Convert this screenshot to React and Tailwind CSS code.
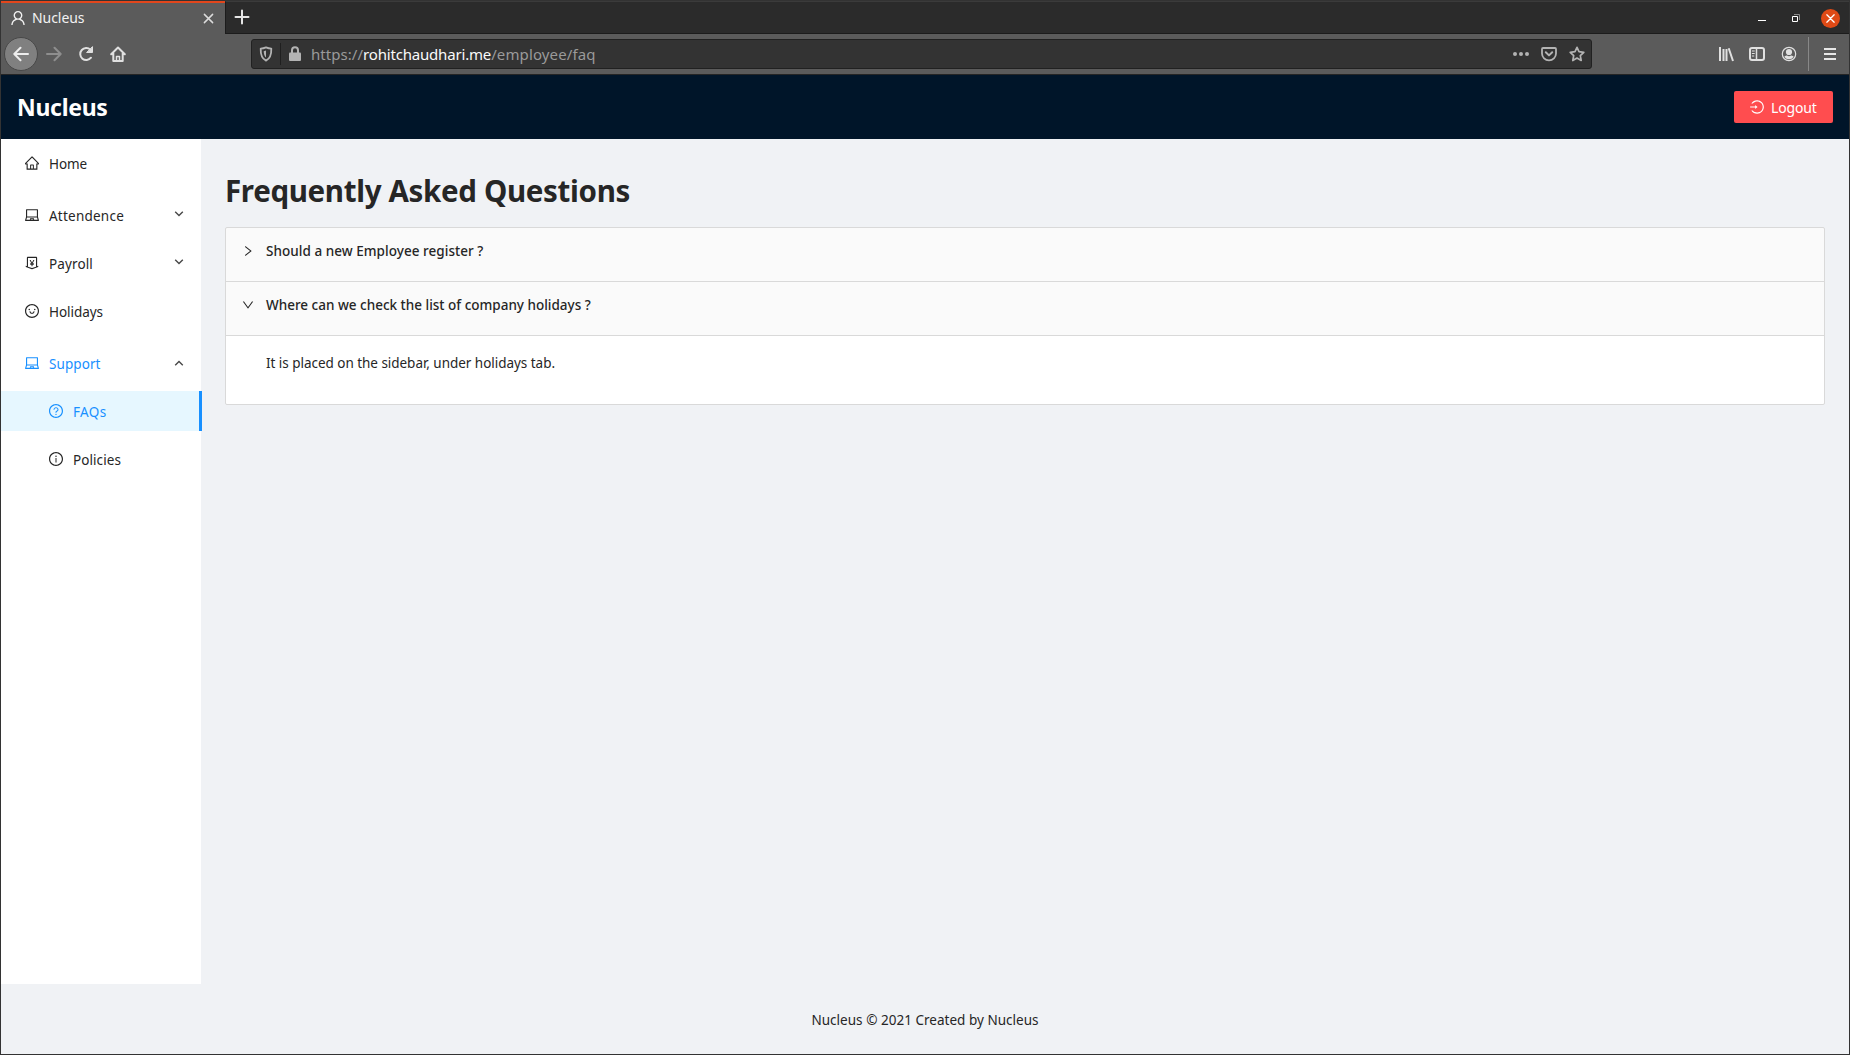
import {
  AiOutlineDown,
  AiOutlineHome,
  AiOutlineInfoCircle,
  AiOutlineLaptop,
  AiOutlineLogin,
  AiOutlineMoneyCollect,
  AiOutlineQuestionCircle,
  AiOutlineRight,
  AiOutlineSmile,
  AiOutlineUser,
} from "react-icons/ai";

// Ant Design glyphs are drawn without their outer margin.
const TIGHT = "64 64 896 896";

function Icon({ size = 16, className = "", children, ...rest }) {
  return (
    <svg
      width={size}
      height={size}
      viewBox="0 0 16 16"
      fill="none"
      stroke="currentColor"
      strokeWidth="2"
      strokeLinecap="round"
      strokeLinejoin="round"
      className={`shrink-0 ${className}`}
      {...rest}
    >
      {children}
    </svg>
  );
}

function TabStrip() {
  return (
    <div className="flex h-[33px] shrink-0 bg-[#2b2b2b]">
      <div className="flex w-[224px] items-center border-t-2 border-[#e2461c] bg-[#5b5b5b] pb-px pl-[9px] pr-[11px] text-[#f2f2f2]">
        <AiOutlineUser viewBox={TIGHT} className="size-4 shrink-0" />
        <span className="-mt-px ml-[6px] text-[14px] leading-5 tracking-[-0.05px]">Nucleus</span>
        <Icon size={11} className="ml-auto text-[#dcdcdc]" strokeWidth="2.1">
          <path d="M2 2l12 12M14 2L2 14" />
        </Icon>
      </div>
      <div className="flex flex-1 items-center border-b border-l border-t border-b-[#1c1c1c] border-l-[#1c1c1c] border-t-[#3b3b3b] pb-px pl-[8px] pr-[9px]">
        <Icon size={16} className="text-[#e6e6e6]">
          <path d="M8 1.500v13M1.500 8h13" />
        </Icon>
        <div className="ml-auto flex items-center">
          <span className="mt-[7px] h-px w-2 bg-white" />
          <svg width="10" height="10" viewBox="0 0 10 10" fill="none" className="ml-[25px] mt-[3px]">
            <path d="M3 .5h5.500V6" stroke="#8a8a8a" />
            <path d="M1.500 2.500h5v5h-5z" stroke="#fff" />
          </svg>
          <span className="ml-[20px] mt-[3px] flex size-[19px] items-center justify-center rounded-full bg-[#df4a16]">
            <Icon size={9} className="text-white" strokeWidth="2.400">
              <path d="M1.500 1.500l13 13M14.500 1.500l-13 13" />
            </Icon>
          </span>
        </div>
      </div>
    </div>
  );
}

function Toolbar() {
  return (
    <div className="flex h-[41px] shrink-0 items-center border-b border-[#252525] bg-[#5b5b5b] pl-[3px] pr-[13px] text-[#e0e0e0]">
      <span className="flex size-[34px] items-center justify-center rounded-full border border-[#484848] bg-[#808080] text-[#eeeeee]">
        <Icon>
          <path d="M15 8H1.500M7.500 1.800L1.300 8l6.200 6.200" />
        </Icon>
      </span>
      <Icon className="ml-[8px] text-[#8e8e8e]">
        <path d="M1 8h13.500M8.500 1.800L14.700 8l-6.200 6.200" />
      </Icon>
      <Icon className="ml-[16px]">
        <path d="M13 11.700a6 6 0 1 1-.6-8" />
        <path d="M14.500 1v5.500H9z" fill="currentColor" strokeWidth="1" />
      </Icon>
      <Icon className="ml-[16px]">
        <path d="M1.200 8.300L8 1.500l6.800 6.800M3.300 7v8h9.400V7" />
        <path d="M6.500 15v-4.500h3V15" strokeWidth="1.500" />
      </Icon>

      <div className="ml-[125px] flex h-[30px] w-[1341px] items-center rounded-[3px] border border-[#212121] bg-[#333333] pl-[6px] pr-[6px] text-[#b3b3b3]">
        <Icon>
          <path d="M8 1.400c2 .9 3.600 1.200 5.300 1.200C13.500 8.500 12 12.700 8 14.600 4 12.700 2.500 8.500 2.700 2.600 4.400 2.600 6 2.300 8 1.400z" strokeWidth="1.800" />
          <path d="M8 4.500v7c-1.500-1.300-2.200-3.200-2.300-6.300z" fill="currentColor" stroke="none" />
        </Icon>
        <span className="ml-[6px] h-[22px] w-px bg-[#1f1f1f]" />
        <Icon className="ml-[6px]">
          <path d="M5 7V4.300a3 3 0 0 1 6 0V7" />
          <rect x="2" y="6.500" width="12" height="8.500" rx="1" fill="currentColor" stroke="none" />
        </Icon>
        <div className="ml-[8px] text-[15px] leading-6 text-[#9a9a9a]">
          <span className="tracking-[0.04px]">https://</span>
          <span className="tracking-[-0.18px] text-[#fafafa]">rohitchaudhari.me</span>
          <span className="tracking-[0.12px]">/employee/faq</span>
        </div>
        <div className="ml-auto flex items-center gap-[12px]">
          <Icon fill="currentColor" stroke="none">
            <circle cx="2" cy="8" r="2" />
            <circle cx="8" cy="8" r="2" />
            <circle cx="14" cy="8" r="2" />
          </Icon>
          <Icon>
            <path d="M2 2h12a1 1 0 0 1 1 1v4.500a7 6.800 0 0 1-14 0V3a1 1 0 0 1 1-1z" strokeWidth="1.800" />
            <path d="M4.800 6.300L8 9.400l3.200-3.100" />
          </Icon>
          <Icon>
            <path d="M8 1.300l2 4.400 4.800.6-3.500 3.300.9 4.900L8 12.100l-4.200 2.400.9-4.900L1.200 6.300 6 5.700z" strokeWidth="1.700" />
          </Icon>
        </div>
      </div>

      <div className="ml-auto flex items-center">
        <Icon strokeLinecap="butt">
          <path d="M2 1v14M5.500 3v12M8.500 3v12" />
          <path d="M10.700 2.300L15 15" />
        </Icon>
        <Icon className="ml-[15px]">
          <rect x="1" y="2" width="14" height="12" rx="2" />
          <path d="M7.500 2v12" strokeWidth="1.500" />
          <path d="M3.300 5h2M3.300 7.500h2M3.300 10h1.500" strokeWidth="1" />
        </Icon>
        <Icon className="ml-[16px]">
          <circle cx="8" cy="8" r="6.700" strokeWidth="1.200" />
          <circle cx="8" cy="6" r="3.100" fill="currentColor" stroke="none" />
          <path d="M3.300 10.700C4.500 9.800 5.500 9.600 6 9.600c1.200.8 2.800.8 4 0 .5 0 1.500.2 2.700 1.100C11.600 12.400 10 13.200 8 13.200s-3.600-.8-4.700-2.500z" fill="currentColor" stroke="none" />
        </Icon>
        <span className="ml-[11px] h-[34px] w-px bg-[#888888]" />
        <span className="ml-[15px] flex w-[12px] flex-col gap-[3px]">
          <span className="h-[2px] bg-[#e6e6e6]" />
          <span className="h-[2px] bg-[#e6e6e6]" />
          <span className="h-[2px] bg-[#e6e6e6]" />
        </span>
      </div>
    </div>
  );
}

function Chevron({ up }) {
  return (
    <svg width="10" height="8" viewBox="0 0 10 8" fill="none" stroke="#484848" strokeWidth="1.400" className="-mt-[3px] ml-auto mr-[17px]">
      <path d={up ? "M1.200 7.200L5 3.400l3.800 3.800" : "M1.200 1.700L5 5.500l3.800-3.800"} />
    </svg>
  );
}

const menu = [
  { label: "Home", icon: AiOutlineHome, cls: "text-[#262626] pl-6", text: "tracking-[-0.1px]" },
  { label: "Attendence", icon: AiOutlineLaptop, cls: "text-[#262626] pl-6 mt-3", text: "tracking-[0.23px]", arrow: "down" },
  { label: "Payroll", icon: AiOutlineMoneyCollect, cls: "text-[#262626] pl-6 mt-2", text: "tracking-[0.13px]", arrow: "down" },
  { label: "Holidays", icon: AiOutlineSmile, cls: "text-[#262626] pl-6 mt-2", text: "tracking-[-0.05px]" },
  { label: "Support", icon: AiOutlineLaptop, cls: "text-[#1890ff] pl-6 mt-3", text: "tracking-[0.08px]", arrow: "up" },
  { label: "FAQs", icon: AiOutlineQuestionCircle, cls: "text-[#1890ff] pl-12 mt-2 w-[201px] bg-[#e6f7ff] border-r-[3px] border-[#1890ff]", text: "tracking-[0.35px]" },
  { label: "Policies", icon: AiOutlineInfoCircle, cls: "text-[#262626] pl-12 mt-2", text: "tracking-[0.08px]" },
];

function Sidebar() {
  return (
    <nav className="w-[200px] shrink-0 bg-white pt-1">
      {menu.map(({ label, icon: Glyph, cls, text, arrow }) => (
        <div key={label} className={`flex h-10 items-center ${cls}`}>
          <Glyph viewBox={TIGHT} className="size-[14px] shrink-0" />
          <span className={`ml-[10px] mt-px text-[13.5px] leading-5 ${text}`}>{label}</span>
          {arrow && <Chevron up={arrow === "up"} />}
        </div>
      ))}
    </nav>
  );
}

function Faq() {
  return (
    <main className="flex-1 px-6 pt-[33px]">
      <h1 className="text-[29.5px] font-bold leading-[38px] tracking-[-0.328px]">Frequently Asked Questions</h1>
      <div className="mt-[17px] rounded-[2px] border border-[#d9d9d9] bg-[#fafafa]">
        <div className="flex h-[54px] border-b border-[#d9d9d9] pl-4 pt-3">
          <AiOutlineRight viewBox={TIGHT} className="mt-[5px] size-3" />
          <span className="ml-3 text-[13.5px] font-medium leading-[22px] tracking-[0.04px]">Should a new Employee register ?</span>
        </div>
        <div className="flex h-[54px] border-b border-[#d9d9d9] pl-4 pt-3">
          <AiOutlineDown viewBox={TIGHT} className="mt-[5px] size-3" />
          <span className="ml-3 text-[13.5px] font-medium leading-[22px]">Where can we check the list of company holidays ?</span>
        </div>
        <div className="h-[68px] rounded-b-[2px] bg-white pl-10 pt-4">
          <p className="text-[13.5px] leading-[22px] tracking-[-0.033px]">It is placed on the sidebar, under holidays tab.</p>
        </div>
      </div>
    </main>
  );
}

export default function App() {
  return (
    <div className="flex h-[1055px] w-[1850px] flex-col border border-[#333333] bg-[#f0f2f5] font-['Noto_Sans',sans-serif] text-[#262626]">
      <TabStrip />
      <Toolbar />
      <header className="flex h-16 shrink-0 items-center justify-between bg-[#001529] pl-4 pr-4">
        <div className="text-[23px] font-bold tracking-[-0.28px] text-white">Nucleus</div>
        <button className="flex h-8 w-[99px] items-center rounded-[2px] bg-[#ff4d4f] pl-4 text-white">
          <AiOutlineLogin viewBox={TIGHT} className="size-[14px]" />
          <span className="ml-[7px] mt-[2px] text-[14px] leading-5 tracking-[-0.18px]">Logout</span>
        </button>
      </header>
      <div className="flex min-h-0 flex-1">
        <Sidebar />
        <Faq />
      </div>
      <footer className="h-[70px] shrink-0 pt-[25px] text-center text-[13.5px] leading-[22px] tracking-[0.02px]">
        Nucleus © 2021 Created by Nucleus
      </footer>
    </div>
  );
}
